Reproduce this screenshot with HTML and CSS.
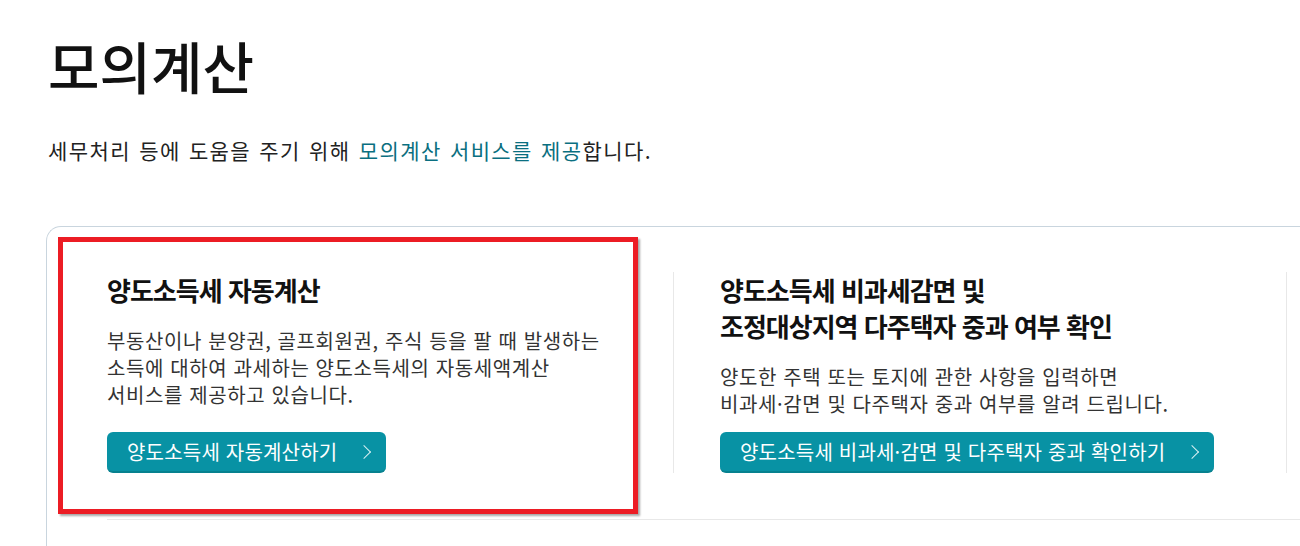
FILE: index.html
```html
<!DOCTYPE html>
<html lang="ko">
<head>
    <meta charset="UTF-8">
    <meta name="viewport" content="width=device-width, initial-scale=1.0">
    <title>모의계산</title>
    <link rel="stylesheet" href="styles.css">
</head>
<body>

    <div class="page">
        <h1 class="page-title">모의계산</h1>
        <p class="page-desc">세무처리 등에 도움을 주기 위해 <span class="point">모의계산 서비스를 제공</span>합니다.</p>

        <section class="calc-card">
            <ul class="calc-list">
                <!-- 양도소득세 자동계산 -->
                <li class="calc-item">
                    <span class="mark-box"></span>
                    <h2 class="calc-title">양도소득세 자동계산</h2>
                    <p class="calc-text">부동산이나 분양권, 골프회원권, 주식 등을 팔 때 발생하는<br>소득에 대하여 과세하는 양도소득세의 자동세액계산<br>서비스를 제공하고 있습니다.</p>
                    <a href="#" class="calc-btn">양도소득세 자동계산하기</a>
                </li>
                <!-- 비과세감면 / 다주택자 중과 -->
                <li class="calc-item">
                    <h2 class="calc-title">양도소득세 비과세감면 및<br>조정대상지역 다주택자 중과 여부 확인</h2>
                    <p class="calc-text">양도한 주택 또는 토지에 관한 사항을 입력하면<br>비과세·감면 및 다주택자 중과 여부를 알려 드립니다.</p>
                    <a href="#" class="calc-btn">양도소득세 비과세·감면 및 다주택자 중과 확인하기</a>
                </li>
                <li class="calc-item">
                    <h2 class="calc-title">&nbsp;</h2>
                </li>
            </ul>
        </section>
    </div>

</body>
</html>
```

FILE: styles.css
```css
html, body {
    margin: 0;
    padding: 0;
    background: #fff;
    overflow: hidden;
}
body {
    font-family: "Noto Sans CJK KR", "Noto Sans", sans-serif;
    color: #222;
}
.page {
    padding: 30px 0 0 48px;
}
.page-title {
    margin: 0;
    font-size: 56px;
    font-weight: 500;
    line-height: 70px;
    letter-spacing: 0;
    color: #111;
}
.page-desc {
    margin: 35px 0 0;
    font-size: 21px;
    line-height: 30px;
    letter-spacing: 1.4px;
    word-spacing: 1px;
    color: #222;
}
.page-desc .point {
    color: #0a6f80;
}

/* 카드 영역 */
.calc-card {
    margin: 61px 0 0 -2px;
    width: 1400px;
    height: 320px;
    padding: 45px 0 0 60px;
    border: 1px solid #c9d5de;
    border-right: none;
    border-bottom: none;
    border-radius: 15px 0 0 0;
}
.calc-list {
    display: flex;
    margin: 0;
    padding: 0 0 46px;
    list-style: none;
    border-bottom: 1px solid #e8e8e8;
}
.calc-item {
    position: relative;
    display: flex;
    flex-direction: column;
    align-items: flex-start;
    flex: 0 0 514px;
    padding: 0 52px 0 46px;
    border-left: 1px solid #e8e8e8;
}
.calc-item:first-child {
    padding-left: 0;
    border-left: none;
}
.calc-title {
    margin: 0;
    font-size: 26px;
    font-weight: 700;
    line-height: 36px;
    letter-spacing: -1px;
    color: #111;
}
.calc-text {
    margin: 19px 0 15px;
    font-size: 20px;
    line-height: 27px;
    letter-spacing: 0.6px;
    color: #333;
}
.calc-btn {
    display: inline-flex;
    align-items: center;
    margin-top: auto;
    height: 39px;
    padding: 0 17px 0 20px;
    background-color: #0892a4;
    border-bottom: 2px solid #07818f;
    border-radius: 6px;
    color: #fff;
    font-size: 20px;
    letter-spacing: 0.2px;
    text-decoration: none;
}
.calc-btn::after {
    content: "";
    width: 9px;
    height: 9px;
    margin: 0 0 0 22px;
    border-top: 1.5px solid #d8f0f3;
    border-right: 1.5px solid #d8f0f3;
    transform: rotate(45deg);
}

/* 강조 표시 박스 */
.mark-box {
    position: absolute;
    left: -49px;
    top: -35px;
    width: 570px;
    height: 267px;
    border: 5px solid #ec1c24;
    box-shadow: 2px 2px 2px rgba(0, 0, 0, 0.35);
}
```
